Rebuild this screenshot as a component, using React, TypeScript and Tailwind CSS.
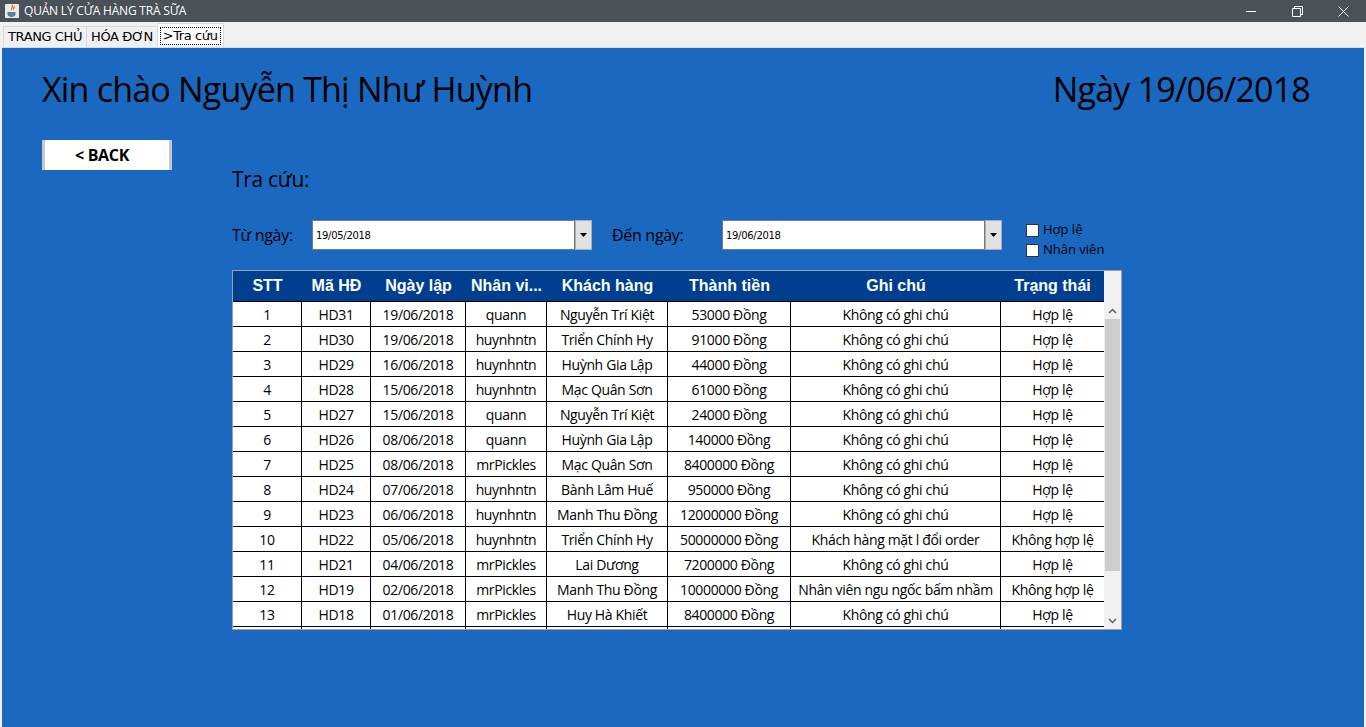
import { useState } from 'react'

const rows = [
  ['1', 'HD31', '19/06/2018', 'quann', 'Nguyễn Trí Kiệt', '53000 Đồng', 'Không có ghi chú', 'Hợp lệ'],
  ['2', 'HD30', '19/06/2018', 'huynhntn', 'Triển Chính Hy', '91000 Đồng', 'Không có ghi chú', 'Hợp lệ'],
  ['3', 'HD29', '16/06/2018', 'huynhntn', 'Huỳnh Gia Lập', '44000 Đồng', 'Không có ghi chú', 'Hợp lệ'],
  ['4', 'HD28', '15/06/2018', 'huynhntn', 'Mạc Quân Sơn', '61000 Đồng', 'Không có ghi chú', 'Hợp lệ'],
  ['5', 'HD27', '15/06/2018', 'quann', 'Nguyễn Trí Kiệt', '24000 Đồng', 'Không có ghi chú', 'Hợp lệ'],
  ['6', 'HD26', '08/06/2018', 'quann', 'Huỳnh Gia Lập', '140000 Đồng', 'Không có ghi chú', 'Hợp lệ'],
  ['7', 'HD25', '08/06/2018', 'mrPickles', 'Mạc Quân Sơn', '8400000 Đồng', 'Không có ghi chú', 'Hợp lệ'],
  ['8', 'HD24', '07/06/2018', 'huynhntn', 'Bành Lâm Huế', '950000 Đồng', 'Không có ghi chú', 'Hợp lệ'],
  ['9', 'HD23', '06/06/2018', 'huynhntn', 'Manh Thu Đồng', '12000000 Đồng', 'Không có ghi chú', 'Hợp lệ'],
  ['10', 'HD22', '05/06/2018', 'huynhntn', 'Triển Chính Hy', '50000000 Đồng', 'Khách hàng mặt l đổi order', 'Không hợp lệ'],
  ['11', 'HD21', '04/06/2018', 'mrPickles', 'Lai Dương', '7200000 Đồng', 'Không có ghi chú', 'Hợp lệ'],
  ['12', 'HD19', '02/06/2018', 'mrPickles', 'Manh Thu Đồng', '10000000 Đồng', 'Nhân viên ngu ngốc bấm nhầm', 'Không hợp lệ'],
  ['13', 'HD18', '01/06/2018', 'mrPickles', 'Huy Hà Khiết', '8400000 Đồng', 'Không có ghi chú', 'Hợp lệ'],
  // next row scrolled below the viewport, only its top rule shows
  ['', '', '', '', '', '', '', ''],
]

const headers = ['STT', 'Mã HĐ', 'Ngày lập', 'Nhân vi...', 'Khách hàng', 'Thành tiền', 'Ghi chú', 'Trạng thái']
const widths = ['w-[69px]', 'w-[69px]', 'w-[95px]', 'w-[81px]', 'w-[121px]', 'w-[123px]', 'w-[210px]', 'w-[103px]']

function DateBox({ value }: { value: string }) {
  return (
    <div className="flex h-[30px]">
      <div className="w-[263px] bg-white border border-[#7a7a7a] flex items-center pl-[3px] text-[10px] text-black font-['DejaVu_Sans',sans-serif] tracking-[-0.3px]">
        {value}
      </div>
      <div className="w-[17px] bg-[#e1e1e1] border border-[#adadad] flex items-center justify-center">
        <svg width="7" height="4" viewBox="0 0 7 4"><path d="M0 0h7L3.5 4z" fill="#000" /></svg>
      </div>
    </div>
  )
}

function Check({ label }: { label: string }) {
  const [on, setOn] = useState(false)
  return (
    <label className="flex items-center gap-[4px] h-[20px] cursor-pointer" onClick={() => setOn(!on)}>
      <span className="w-[13px] h-[13px] bg-white border border-[#333] flex items-center justify-center text-[10px]">{on ? '✓' : ''}</span>
      <span className="text-[13px] text-black">{label}</span>
    </label>
  )
}

export default function App() {
  return (
    <div className="w-[1366px] h-[727px] flex flex-col overflow-hidden font-['Open_Sans',sans-serif] bg-[#f0f0f0]">
      <div className="h-[22px] bg-[#4a5157] flex items-center text-white">
        <div className="w-[24px] flex justify-center">
          <svg width="16" height="16" viewBox="0 0 16 16">
            <rect x="1" y="1" width="14" height="14" rx="1" fill="#e8e8e8" />
            <path d="M8 2c2 2-2 3 0 5M10 3c1 1.5-1.5 2 0 3.5" stroke="#e76f00" strokeWidth="1.2" fill="none" />
            <path d="M3.5 9h8v2.5c0 1.5-2 2.5-4 2.5s-4-1-4-2.5z" fill="#5382a1" />
          </svg>
        </div>
        <span className="text-[12px] tracking-[-0.2px]">QUẢN LÝ CỬA HÀNG TRÀ SỮA</span>
        <div className="ml-auto flex h-full">
          <div className="w-[46px] flex items-center justify-center">
            <svg width="11" height="11" viewBox="0 0 11 11"><path d="M0 5.5h10" stroke="#fff" /></svg>
          </div>
          <div className="w-[46px] flex items-center justify-center">
            <svg width="11" height="11" viewBox="0 0 11 11"><path d="M0.5 2.5h8v8h-8zM2.5 2.5v-2h8v8h-2" stroke="#fff" fill="none" /></svg>
          </div>
          <div className="w-[46px] flex items-center justify-center">
            <svg width="11" height="11" viewBox="0 0 11 11"><path d="M0.5 0.5l10 10M10.5 0.5l-10 10" stroke="#fff" /></svg>
          </div>
        </div>
      </div>

      <div className="h-[25px] flex items-end pl-[3px] text-[13px] text-black font-['DejaVu_Sans',sans-serif] tracking-[-0.4px]">
        <div className="h-[21px] px-[4px] border border-[#d9d9d9] border-b-0 flex items-center">TRANG CHỦ</div>
        <div className="h-[21px] px-[4px] border border-[#d9d9d9] border-b-0 border-l-0 flex items-center">HÓA ĐƠN</div>
        <div className="h-[24px] px-[2px] bg-white border border-[#d9d9d9] border-b-0 border-l-0 flex items-center">
          <span className="border border-dotted border-black px-[2px] leading-[16px]">&gt;Tra cứu</span>
        </div>
      </div>

      <div className="flex-1 mx-[2px] border-t border-[#d9d9d9] bg-[#1a68c0] flex flex-col pl-[40px] pr-[54px]">
        <div className="flex justify-between items-center h-[82px] text-black text-[34px] tracking-[-0.8px]">
          <span>Xin chào Nguyễn Thị Như Huỳnh</span>
          <span>Ngày 19/06/2018</span>
        </div>

        <div className="flex">
          <div className="w-[190px] pt-[10px]">
            <button className="w-[130px] h-[30px] pr-[10px] bg-white border-x-[3px] border-[#c8c8c8] text-[16px] font-bold text-black tracking-[-0.3px]">
              &lt; BACK
            </button>
          </div>

          <div className="flex flex-col">
            <div className="text-[21px] text-black mt-[34px] h-[30px] leading-[30px] tracking-[-0.3px]">Tra cứu:</div>

            <div className="flex items-center mt-[21px] h-[40px]">
              <span className="w-[80px] text-[16px] text-black tracking-[-0.3px]">Từ ngày:</span>
              <DateBox value="19/05/2018" />
              <span className="w-[130px] pl-[20px] text-[16px] text-black tracking-[-0.3px]">Đến ngày:</span>
              <DateBox value="19/06/2018" />
              <div className="ml-[24px] pt-[10px] flex flex-col">
                <Check label="Hợp lệ" />
                <Check label="Nhân viên" />
              </div>
            </div>

            <div className="mt-[15px] w-[890px] h-[360px] border border-[#a0a0a0] bg-white flex overflow-hidden">
              <div className="w-[871px] flex flex-col overflow-hidden">
                <div className="h-[31px] bg-[#003f8f] flex shrink-0 text-white text-[16px] font-bold font-['Liberation_Sans',sans-serif] border-b border-black">
                  {headers.map((h, i) => (
                    <div key={i} className={`${widths[i]} shrink-0 flex items-center justify-center whitespace-nowrap`}>{h}</div>
                  ))}
                </div>
                {rows.map((r, ri) => (
                  <div key={ri} className="h-[25px] flex shrink-0 border-b border-black text-[14px] text-black tracking-[-0.35px]">
                    {r.map((c, ci) => (
                      <div
                        key={ci}
                        className={`${widths[ci]} shrink-0 flex items-center justify-center whitespace-nowrap ${ci < 7 ? 'border-r border-black' : ''}`}
                      >
                        {c}
                      </div>
                    ))}
                  </div>
                ))}
              </div>
              <div className="w-[17px] bg-[#f0f0f0] flex flex-col">
                <div className="h-[31px]" />
                <div className="h-[17px] flex items-center justify-center">
                  <svg width="9" height="6" viewBox="0 0 9 6"><path d="M1 5l3.5-3.5L8 5" stroke="#606060" strokeWidth="1.5" fill="none" /></svg>
                </div>
                <div className="h-[252px] mx-[1px] bg-[#cdcdcd]" />
                <div className="flex-1" />
                <div className="h-[17px] flex items-center justify-center">
                  <svg width="9" height="6" viewBox="0 0 9 6"><path d="M1 1l3.5 3.5L8 1" stroke="#606060" strokeWidth="1.5" fill="none" /></svg>
                </div>
              </div>
            </div>
          </div>
        </div>
      </div>
    </div>
  )
}
